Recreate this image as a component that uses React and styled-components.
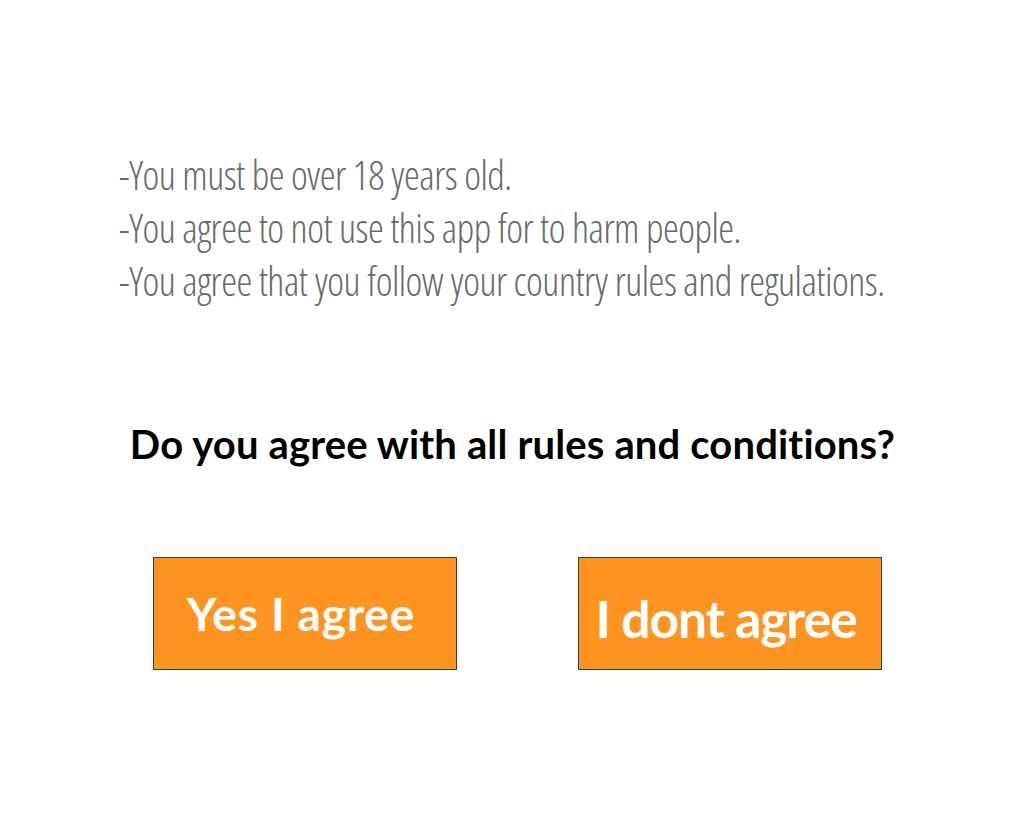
import React from "react";
import styled, { createGlobalStyle } from "styled-components";

const Global = createGlobalStyle`
  html, body { margin: 0; padding: 0; background: #ffffff; }
  body { width: 1025px; height: 830px; overflow: hidden; }
`;

const Page = styled.div`
  width: 1025px;
  height: 830px;
  display: flex;
  flex-direction: column;
  box-sizing: border-box;
  padding-top: 148px;
`;

const Rules = styled.div`
  padding-left: 119px;
  display: flex;
  flex-direction: column;
`;

const Rule = styled.div`
  font-family: "Open Sans", "Noto Sans", sans-serif;
  font-stretch: 75%;
  font-weight: 300;
  font-size: 40px;
  line-height: 53px;
  letter-spacing: -0.5px;
  color: #6a6a6a;
  white-space: nowrap;
`;

const Question = styled.div`
  margin-top: 112px;
  text-align: center;
  font-family: Lato, "Open Sans", sans-serif;
  font-weight: 700;
  font-size: 40px;
  line-height: 50px;
  letter-spacing: 0.15px;
  color: #000;
  white-space: nowrap;
`;

const Buttons = styled.div`
  margin-top: 88px;
  display: flex;
  padding-left: 153px;
  gap: 121px;
`;

const Button = styled.button`
  width: 304px;
  height: 113px;
  box-sizing: border-box;
  border: 1px solid #3a3a3a;
  background: #ff9520;
  color: #ffffff;
  font-family: Lato, "Open Sans", sans-serif;
  font-weight: 700;
  font-size: ${(p) => p.$size}px;
  letter-spacing: ${(p) => p.$track}px;
  padding: ${(p) => p.$drop}px 8px 0 0;
  display: flex;
  align-items: center;
  justify-content: center;
  white-space: nowrap;
  cursor: pointer;
`;

export default function App() {
  return (
    <>
      <Global />
      <Page>
        <Rules>
          <Rule>-You must be over 18 years old.</Rule>
          <Rule>-You agree to not use this app for to harm people.</Rule>
          <Rule>-You agree that you follow your country rules and regulations.</Rule>
        </Rules>
        <Question>Do you agree with all rules and conditions?</Question>
        <Buttons>
          <Button $size={46} $track={0.9} $drop={0}>Yes I agree</Button>
          <Button $size={52} $track={-1.3} $drop={9}>I dont agree</Button>
        </Buttons>
      </Page>
    </>
  );
}
